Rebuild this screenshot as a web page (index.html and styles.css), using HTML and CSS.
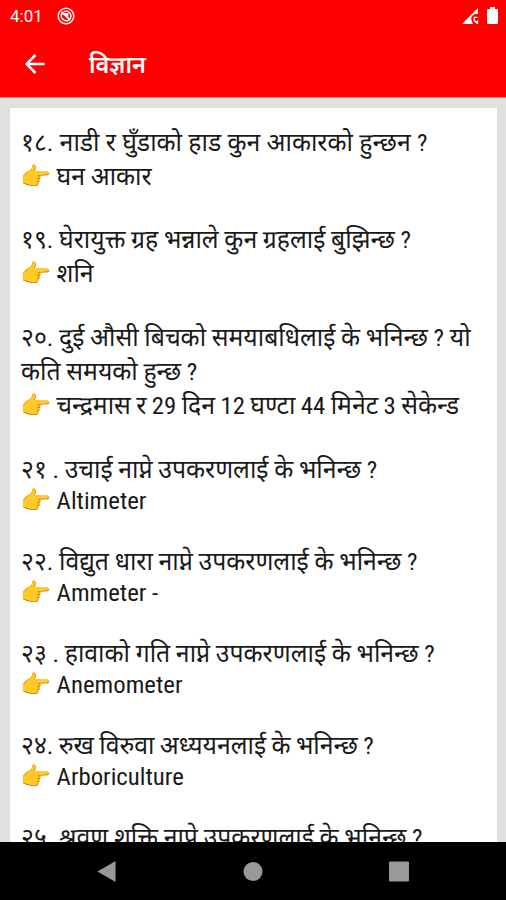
FILE: index.html
```html
<!DOCTYPE html>
<html lang="en">
<head>
<meta charset="utf-8">
<title>विज्ञान</title>
<link rel="stylesheet" href="styles.css">
</head>
<body>
<div class="screen">
<header class="header">
<div class="status">
<span class="clock">4:01</span>
<svg class="dnd" viewBox="0 0 18 18"><circle cx="9" cy="9" r="7.8" fill="none" stroke="#fff" stroke-width="1.5"/><path d="M5.2 6A4.9 4.9 0 0 0 12 12.8M6.6 4.8a4.9 4.9 0 0 1 6.4 7" fill="none" stroke="#fff" stroke-width="1.4"/><path d="M4.5 4.8 13.2 13.2M7.4 7h3v3" fill="none" stroke="#fff" stroke-width="1.8"/></svg>
<svg class="signal" viewBox="0 0 17 16"><path d="M0 16 16 0V6H13.5Q9 7 9.2 11.5L11 16Z" fill="#fff"/><path d="M15.5 9.4h-3.2v3.2l3.2 2.8v-3" fill="none" stroke="#fff" stroke-width="1.4"/></svg>
<svg class="battery" viewBox="0 0 11 17"><path d="M3 0H8V2H10Q11 2 11 3V16Q11 17 10 17H1Q0 17 0 16V3Q0 2 1 2H3Z" fill="#fff"/></svg>
</div>
<div class="toolbar">
<svg class="back" viewBox="0 0 20 20"><path d="M19.5 10H2M10.5 1 1.5 10 10.5 19" fill="none" stroke="#fff" stroke-width="2.6"/></svg>
<h1 class="title">विज्ञान</h1>
</div>
</header>
<main class="content">
<article class="card">
<section class="item"><p class="line wide">१८. नाडी र घुँडाको हाड कुन आकारको हुन्छन ?</p><p class="line"><span class="hand">👉</span> घन आकार</p></section>
<section class="item"><p class="line">१९. <span lang="ne">घेरायुक्त</span> ग्रह भन्नाले कुन ग्रहलाई बुझिन्छ ?</p><p class="line"><span class="hand">👉</span> शनि</p></section>
<section class="item"><p class="line">२०. दुई औसी बिचको समयाबधिलाई के भनिन्छ ? यो</p><p class="line">कति समयको हुन्छ ?</p><p class="line tight"><span class="hand">👉</span> चन्द्रमास र 29 दिन 12 घण्टा 44 मिनेट 3 सेकेन्ड</p></section>
<section class="item"><p class="line">२१ . उचाई नाप्ने उपकरणलाई के भनिन्छ ?</p><p class="line latin"><span class="hand">👉</span> Altimeter</p></section>
<section class="item"><p class="line">२२. विद्युत धारा नाप्ने उपकरणलाई के भनिन्छ ?</p><p class="line latin"><span class="hand">👉</span> Ammeter -</p></section>
<section class="item"><p class="line">२३ . हावाको गति नाप्ने उपकरणलाई के भनिन्छ ?</p><p class="line latin"><span class="hand">👉</span> Anemometer</p></section>
<section class="item"><p class="line tight">२४. रुख विरुवा अध्ययनलाई के भनिन्छ ?</p><p class="line latin"><span class="hand">👉</span> Arboriculture</p></section>
<section class="item"><p class="line">२५. श्रवण <span lang="ne">शक्ति</span> नाप्ने उपकरणलाई के भनिन्छ ?</p></section>
</article>
</main>
<nav class="nav">
<svg viewBox="0 0 20 22"><path d="M0 11 19 0V22Z" fill="#999"/></svg>
<svg viewBox="0 0 20 20"><circle cx="10" cy="10" r="9.5" fill="#999"/></svg>
<svg viewBox="0 0 20 20"><rect width="20" height="20" rx="1" fill="#999"/></svg>
</nav>
</div>
</body>
</html>
```
FILE: styles.css
```css
* { box-sizing: border-box; margin: 0; }
body { margin: 0; }
.screen { width: 506px; height: 900px; display: flex; flex-direction: column; overflow: hidden; font-family: "Roboto Condensed", Roboto, "Noto Sans Devanagari", "Noto Sans", "Noto Color Emoji", sans-serif; }
.header { height: 98px; flex: none; background: #f00; border-bottom: 1px solid #e88; color: #fff; }
.status { height: 32px; display: flex; align-items: center; padding: 0 8px 0 10px; }
.clock { font: 400 17px Roboto, sans-serif; width: 47px; }
.dnd { width: 18px; height: 18px; margin-top: -1px; }
.signal { width: 17px; height: 16px; margin-left: auto; margin-right: 8px; margin-top: -1px; }
.battery { width: 11px; height: 17px; margin-top: -2px; }
.toolbar { height: 64px; display: flex; align-items: center; padding-left: 25px; }
.back { width: 20px; height: 20px; margin-right: 44px; }
.title { font-size: 23.5px; font-weight: 600; padding-top: 6px; }
.content { flex: 1; min-height: 0; overflow: hidden; background: #e0e0e0; padding: 10px 9px 0 10px; }
.card { background: #fff; min-height: 100%; padding: 18px 11px 0; }
.item { margin-bottom: 30px; }
.item:first-child { margin-bottom: 29px; }
.line { font-size: 24.8px; font-weight: 400; line-height: 34px; height: 34px; white-space: nowrap; font-stretch: 75%; color: #1a1a1a; }
.wide { word-spacing: 0.6px; }
.tight { word-spacing: -0.3px; }
.latin { line-height: 27px; height: 28px; }
.hand { margin-left: -1px; }
.nav { height: 58px; flex: none; background: #000; display: flex; justify-content: space-between; align-items: center; padding: 0 97px; }
.nav svg { width: 20px; height: 21px; }
```
